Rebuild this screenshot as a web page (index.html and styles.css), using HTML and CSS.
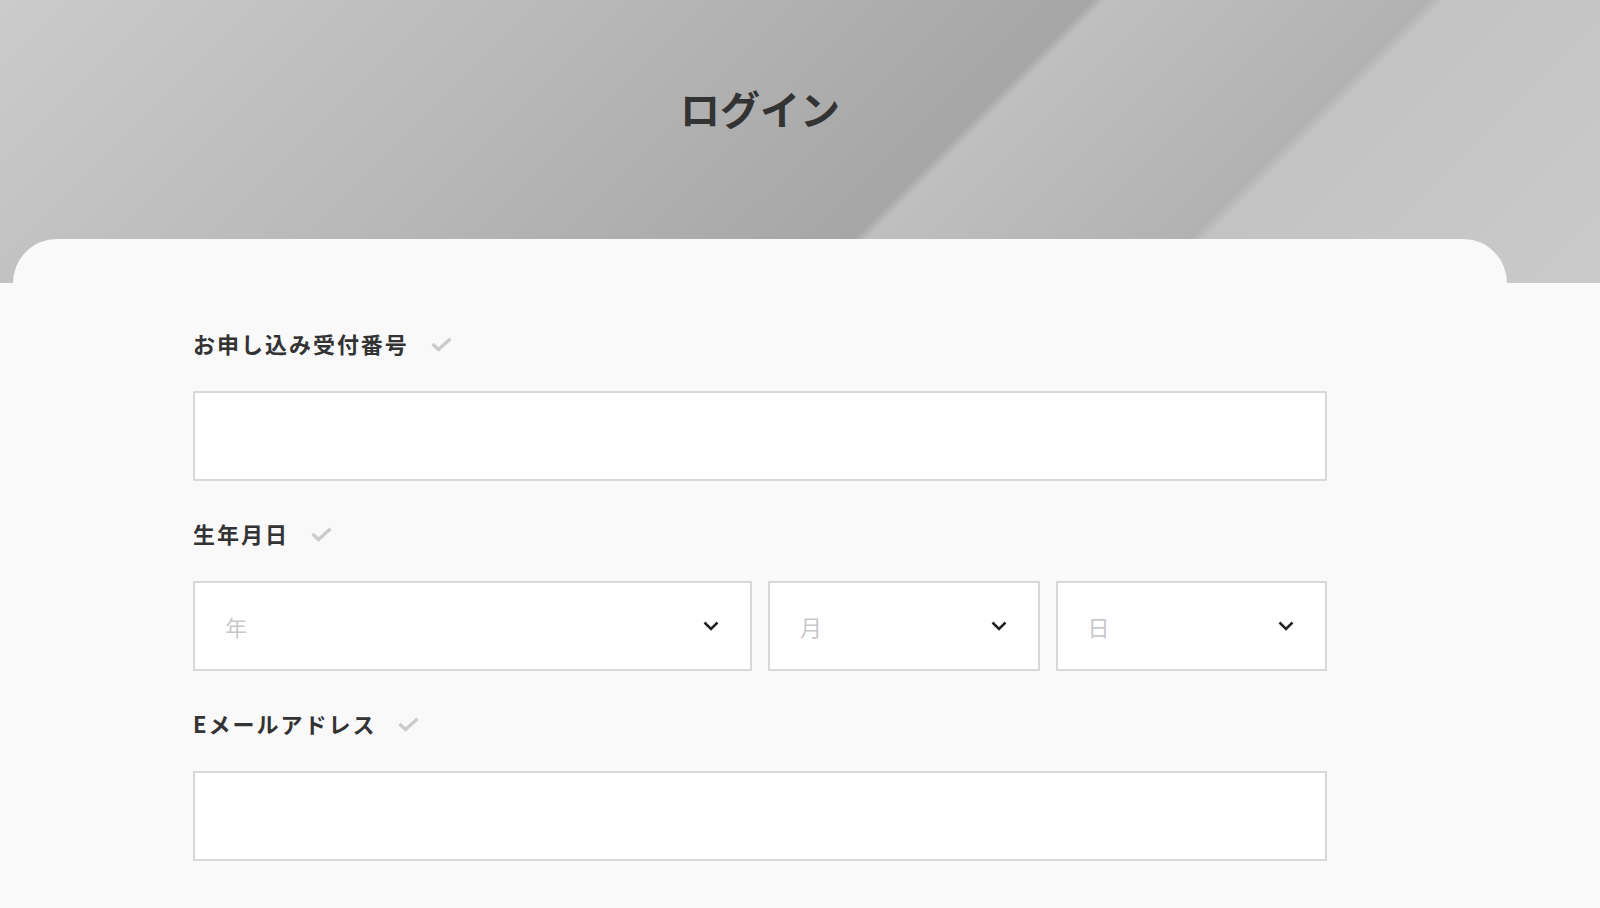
FILE: index.html
```html
<!DOCTYPE html>
<html lang="ja">
<head>
<meta charset="utf-8">
<title>ログイン</title>
<link rel="stylesheet" href="styles.css">
</head>
<body>
<header class="hero">
  <div class="hero-inner">
    <h1 class="title">ログイン</h1>
  </div>
</header>
<main class="wrap">
  <section class="card">
    <form class="form">
      <div class="field">
        <div class="label-row">
          <span class="label">お申し込み受付番号</span>
          <svg class="check" width="21" height="15" viewBox="0 0 21 15"><path d="M1.5 7 L7.5 12.5 L19.5 1.8" fill="none" stroke="#cbcbcb" stroke-width="3.4"/></svg>
        </div>
        <div class="input"></div>
      </div>
      <div class="field">
        <div class="label-row">
          <span class="label">生年月日</span>
          <svg class="check" width="21" height="15" viewBox="0 0 21 15"><path d="M1.5 7 L7.5 12.5 L19.5 1.8" fill="none" stroke="#cbcbcb" stroke-width="3.4"/></svg>
        </div>
        <div class="selects">
          <div class="select"><span class="ph">年</span><svg class="chev" width="16" height="10" viewBox="0 0 16 10"><path d="M1.5 1.5 L8 8 L14.5 1.5" fill="none" stroke="#222" stroke-width="2.5"/></svg></div>
          <div class="select"><span class="ph">月</span><svg class="chev" width="16" height="10" viewBox="0 0 16 10"><path d="M1.5 1.5 L8 8 L14.5 1.5" fill="none" stroke="#222" stroke-width="2.5"/></svg></div>
          <div class="select"><span class="ph">日</span><svg class="chev" width="16" height="10" viewBox="0 0 16 10"><path d="M1.5 1.5 L8 8 L14.5 1.5" fill="none" stroke="#222" stroke-width="2.5"/></svg></div>
        </div>
      </div>
      <div class="field last">
        <div class="label-row">
          <span class="label">Eメールアドレス</span>
          <svg class="check" width="21" height="15" viewBox="0 0 21 15"><path d="M1.5 7 L7.5 12.5 L19.5 1.8" fill="none" stroke="#cbcbcb" stroke-width="3.4"/></svg>
        </div>
        <div class="input"></div>
      </div>
    </form>
  </section>
</main>
</body>
</html>
```

FILE: styles.css
```css
* { box-sizing: border-box; }
html, body { margin: 0; padding: 0; }
body {
  background: #f9f9f9;
  font-family: "Noto Sans CJK JP", "Noto Sans", sans-serif;
  color: #333;
  overflow: hidden;
}
.hero {
  height: 283px;
  background: linear-gradient(135deg,
    #cbcbcb 0%,
    #b9b9b9 30%,
    #a6a6a6 58%,
    #bfbfbf 58.7%,
    #b2b2b2 75.9%,
    #c3c3c3 76.7%,
    #cacaca 100%);
}
.hero-inner {
  width: 1520px;
  padding-top: 88px;
  text-align: center;
}
.title {
  margin: 0;
  font-size: 40px;
  line-height: 40px;
  font-weight: 700;
  color: #333;
}
.wrap {
  width: 1520px;
  padding: 0 13px;
}
.card {
  margin-top: -44px;
  background: #f9f9f9;
  border-radius: 44px 44px 0 0;
  padding: 90px 180px 40px;
}
.field { margin-bottom: 38px; }
.field.last { margin-bottom: 0; }
.label-row {
  display: flex;
  align-items: center;
  height: 32px;
  padding-bottom: 4px;
  margin-bottom: 30px;
}
.label {
  font-size: 22px;
  line-height: 28px;
  font-weight: 700;
  letter-spacing: 0.09em;
  color: #333;
}
.check { margin-left: 22px; margin-top: 2px; }
.input {
  height: 90px;
  background: #fff;
  border: 2px solid #d8d8d8;
}
.selects {
  display: grid;
  grid-template-columns: 559px 1fr 1fr;
  gap: 16px;
}
.select {
  height: 90px;
  background: #fff;
  border: 2px solid #d8d8d8;
  display: flex;
  align-items: center;
  justify-content: space-between;
  padding: 0 31px 0 30px;
}
.ph {
  font-size: 22px;
  color: #c8c8c8;
  line-height: 1;
  margin-top: -1px;
}
.chev { display: block; }
```
